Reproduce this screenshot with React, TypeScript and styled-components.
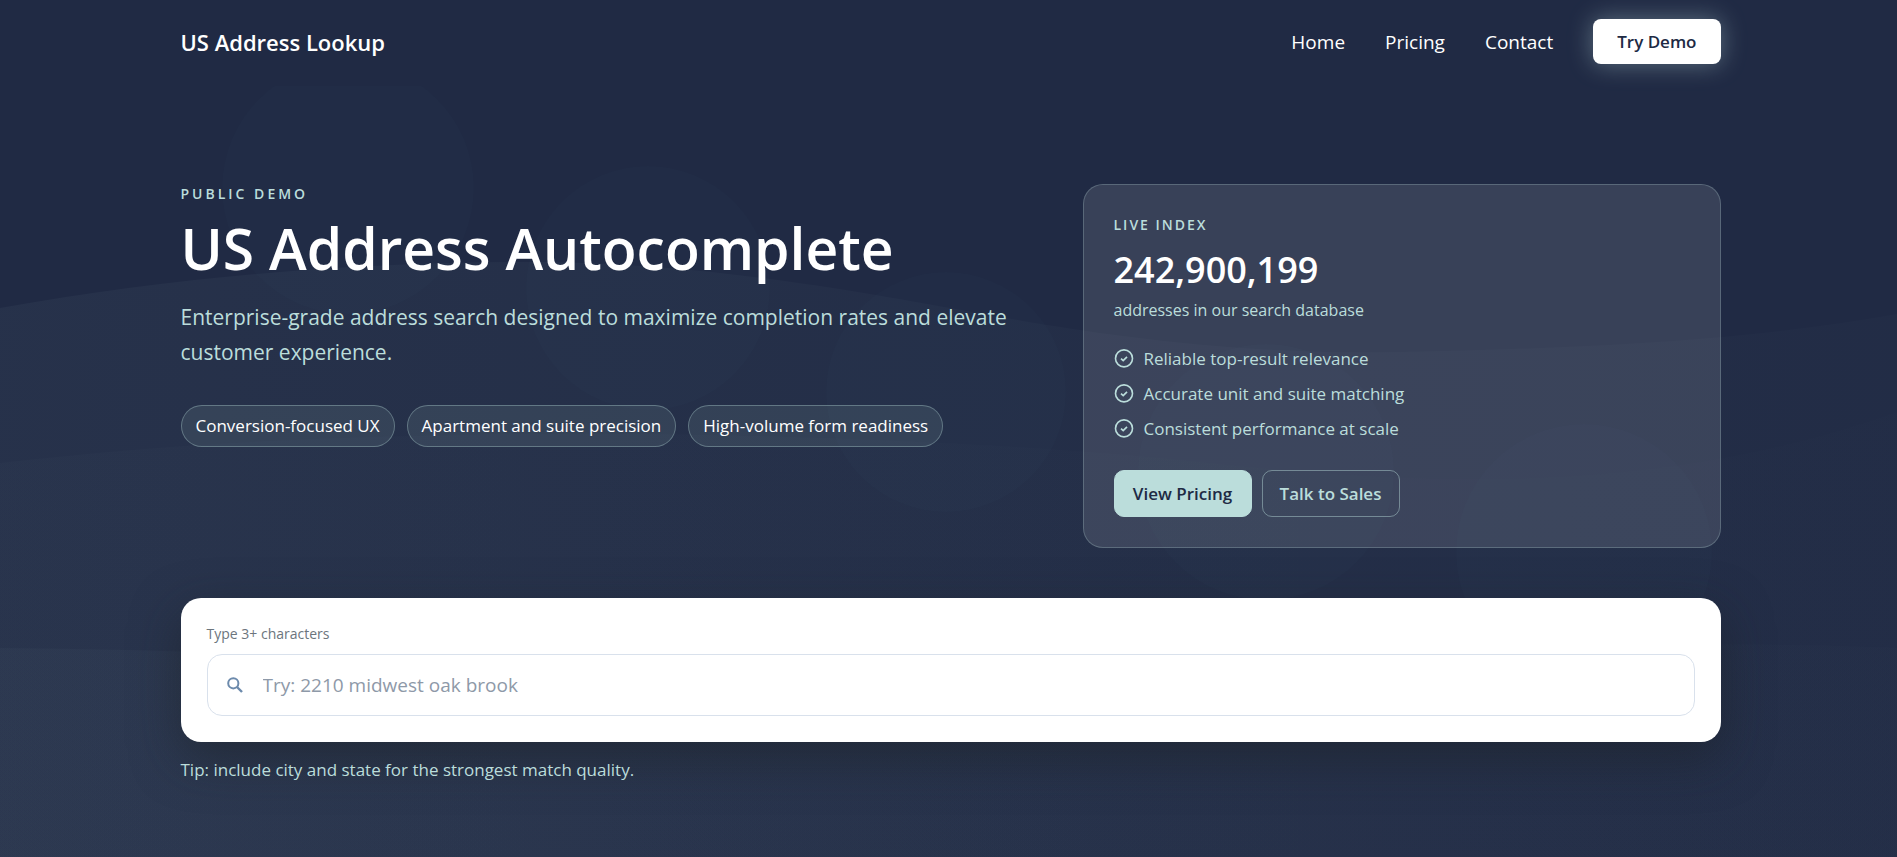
import React from "react";
import styled, { createGlobalStyle } from "styled-components";

const Global = createGlobalStyle`
  *, *::before, *::after { box-sizing: border-box; }
  body {
    margin: 0;
    background: #202a44;
    color: #fff;
    font-family: "Segoe UI", "Open Sans", "Noto Sans", sans-serif;
    font-size: 17px;
  }
  h1, p, ul { margin: 0; padding: 0; }
  a { text-decoration: none; color: inherit; }
`;

const Page = styled.div`
  position: relative;
  min-height: 100vh;
  overflow: hidden;
  background: #202a44;
`;

const Backdrop = styled.svg`
  position: absolute;
  inset: 0;
  width: 100%;
  height: 100%;
`;

const Container = styled.div`
  width: 100%;
  max-width: 1604px;
  margin: 0 auto;
  padding: 0 30px 0 34px;
`;

const Header = styled.header`
  position: relative;
  padding-bottom: 3px;
  background: #202a44;
`;

const HeaderRow = styled(Container)`
  display: flex;
  align-items: center;
  justify-content: space-between;
  height: 83px;
`;

const Brand = styled.a`
  font-size: 22px;
  line-height: 32px;
  font-weight: 600;
`;

const Nav = styled.nav`
  display: flex;
  align-items: center;
  gap: 40px;
`;

const NavLink = styled.a`
  font-size: 19px;
  line-height: 28px;
  font-weight: 500;
`;

const DemoButton = styled.button`
  height: 45px;
  padding: 0 24px;
  border: 0;
  border-radius: 8px;
  background: #fff;
  color: #202a44;
  font: inherit;
  font-weight: 600;
  box-shadow: 0 0 24px rgba(187, 221, 219, 0.4);
`;

const Main = styled.main`
  position: relative;
`;

const Hero = styled(Container)`
  padding-top: 98px;
  padding-bottom: 72px;
`;

const HeroGrid = styled.div`
  display: grid;
  grid-template-columns: minmax(0, 854fr) minmax(0, 638fr);
  gap: 48px;
`;

const Eyebrow = styled.p<{ $tight?: boolean }>`
  color: #bbdddb;
  font-size: 14px;
  line-height: 20px;
  font-weight: 600;
  letter-spacing: ${({ $tight }) => ($tight ? "2px" : "3px")};
`;

const Title = styled.h1`
  margin-top: 8px;
  font-size: 57px;
  line-height: 72px;
  font-weight: 600;
`;

const Lead = styled.p`
  margin-top: 16px;
  color: #bbdddb;
  font-size: 21px;
  line-height: 35px;
`;

const Pills = styled.ul`
  display: flex;
  flex-wrap: wrap;
  gap: 12px;
  margin-top: 35px;
  list-style: none;
`;

const Pill = styled.li`
  padding: 8px 14px;
  border: 1px solid rgba(187, 221, 219, 0.35);
  border-radius: 21px;
  background: rgba(187, 221, 219, 0.1);
  line-height: 24px;
`;

const Card = styled.section`
  padding: 30px;
  border: 1px solid rgba(187, 221, 219, 0.25);
  border-radius: 20px;
  background: rgba(255, 255, 255, 0.11);
  color: #bbdddb;
`;

const Count = styled.p`
  margin-top: 8px;
  color: #fff;
  font-size: 36px;
  line-height: 54px;
  font-weight: 600;
`;

const CountNote = styled.p`
  font-size: 16px;
  line-height: 26px;
`;

const Features = styled.ul`
  display: grid;
  gap: 8px;
  margin-top: 22px;
  list-style: none;
`;

const Feature = styled.li`
  display: flex;
  align-items: center;
  gap: 10px;
  line-height: 27px;
`;

const Actions = styled.div`
  display: flex;
  gap: 10px;
  margin-top: 28px;
`;

const ActionLink = styled.a<{ $solid?: boolean }>`
  min-width: 138px;
  padding: 10px 17px;
  border: 1px solid ${({ $solid }) => ($solid ? "#bbdddb" : "rgba(187, 221, 219, 0.45)")};
  border-radius: 10px;
  background: ${({ $solid }) => ($solid ? "#bbdddb" : "transparent")};
  color: ${({ $solid }) => ($solid ? "#202a44" : "#bbdddb")};
  font-weight: 600;
  line-height: 25px;
  text-align: center;
`;

const SearchCard = styled.form`
  margin-top: 50px;
  padding: 25px 26px 26px;
  border-radius: 20px;
  background: #fff;
  box-shadow: 0 16px 48px rgba(27, 33, 38, 0.55);
`;

const SearchLabel = styled.label`
  display: block;
  color: #6c757d;
  font-size: 14px;
  line-height: 22px;
`;

const SearchBox = styled.div`
  display: flex;
  align-items: center;
  gap: 20px;
  height: 62px;
  margin-top: 9px;
  padding: 0 19px;
  border: 1px solid #d9e1ec;
  border-radius: 15px;
  color: #6c8aac;
`;

const SearchInput = styled.input`
  flex: 1;
  min-width: 0;
  height: 100%;
  padding: 0;
  border: 0;
  outline: 0;
  background: transparent;
  color: #202a44;
  font: inherit;
  font-size: 19px;
  &::placeholder { color: #8e99a8; opacity: 1; }
`;

const Tip = styled.p`
  margin-top: 15px;
  color: #bbdddb;
  line-height: 26px;
`;

const CheckIcon = () => (
  <svg width="20" height="20" viewBox="0 0 20 20" fill="none" stroke="currentColor" aria-hidden="true">
    <circle cx="10" cy="9.4" r="8.5" strokeWidth="1.6" />
    <path d="M7 9.6 9.2 11.6 13 7.8" strokeWidth="1.7" />
  </svg>
);

const SearchIcon = () => (
  <svg width="16" height="16" viewBox="0 0 16 16" fill="none" stroke="currentColor" strokeWidth="2" aria-hidden="true">
    <circle cx="6.3" cy="6.3" r="5.1" />
    <path d="M10 10 15 15" strokeWidth="2.4" />
  </svg>
);

const Waves = () => (
  <Backdrop viewBox="0 0 1897 857" preserveAspectRatio="none" aria-hidden="true">
    <defs>
      <linearGradient id="wave" gradientUnits="userSpaceOnUse" x1="0" y1="0" x2="1897" y2="0">
        <stop offset="0" stopColor="#bbdddb" stopOpacity="1" />
        <stop offset="0.6" stopColor="#bbdddb" stopOpacity="0.5" />
        <stop offset="1" stopColor="#bbdddb" stopOpacity="0.3" />
      </linearGradient>
    </defs>
    <g fill="url(#wave)">
      <path
        fillOpacity="0.042"
        d="M0 308C180 276 360 262 530 262S860 292 950 308 1200 356 1400 352 1750 340 1897 314V857H0Z"
      />
      <path
        fillOpacity="0.014"
        d="M0 463C200 440 360 436 530 434S1000 440 1200 462 1650 500 1897 412V857H0Z"
      />
      <path fillOpacity="0.026" d="M0 648C380 650 800 690 1200 668S1700 640 1897 648V857H0Z" />
    </g>
    <g fill="#bbdddb" fillOpacity="0.01">
      <circle cx="348" cy="188" r="126" />
      <circle cx="648" cy="288" r="122" />
      <circle cx="946" cy="392" r="120" />
      <circle cx="1266" cy="472" r="128" />
      <circle cx="1584" cy="552" r="128" />
    </g>
  </Backdrop>
);

const pills = ["Conversion-focused UX", "Apartment and suite precision", "High-volume form readiness"];
const features = [
  "Reliable top-result relevance",
  "Accurate unit and suite matching",
  "Consistent performance at scale",
];

export default function App() {
  return (
    <Page>
      <Global />
      <Waves />
      <Header>
        <HeaderRow>
          <Brand href="#">US Address Lookup</Brand>
          <Nav>
            <NavLink href="#home">Home</NavLink>
            <NavLink href="#pricing">Pricing</NavLink>
            <NavLink href="#contact">Contact</NavLink>
            <DemoButton type="button">Try Demo</DemoButton>
          </Nav>
        </HeaderRow>
      </Header>
      <Main>
        <Hero>
          <HeroGrid>
            <div>
              <Eyebrow>PUBLIC DEMO</Eyebrow>
              <Title>US Address Autocomplete</Title>
              <Lead>
                Enterprise-grade address search designed to maximize completion rates and elevate
                customer experience.
              </Lead>
              <Pills>
                {pills.map((label) => (
                  <Pill key={label}>{label}</Pill>
                ))}
              </Pills>
            </div>
            <Card>
              <Eyebrow $tight>LIVE INDEX</Eyebrow>
              <Count>242,900,199</Count>
              <CountNote>addresses in our search database</CountNote>
              <Features>
                {features.map((label) => (
                  <Feature key={label}>
                    <CheckIcon />
                    {label}
                  </Feature>
                ))}
              </Features>
              <Actions>
                <ActionLink $solid href="#pricing">View Pricing</ActionLink>
                <ActionLink href="#contact">Talk to Sales</ActionLink>
              </Actions>
            </Card>
          </HeroGrid>
          <SearchCard>
            <SearchLabel htmlFor="address">Type 3+ characters</SearchLabel>
            <SearchBox>
              <SearchIcon />
              <SearchInput id="address" type="text" placeholder="Try: 2210 midwest oak brook" />
            </SearchBox>
          </SearchCard>
          <Tip>Tip: include city and state for the strongest match quality.</Tip>
        </Hero>
      </Main>
    </Page>
  );
}
